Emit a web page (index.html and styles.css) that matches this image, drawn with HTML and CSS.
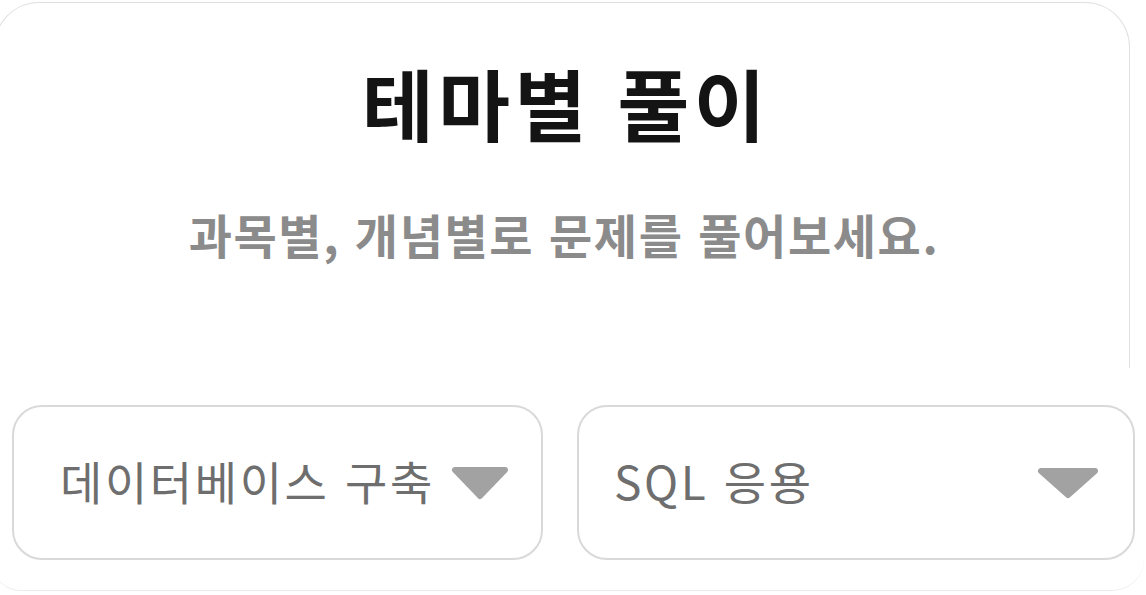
FILE: index.html
```html
<!DOCTYPE html>
<html lang="ko">
<head>
<meta charset="utf-8">
<title>테마별 풀이</title>
<link rel="stylesheet" href="styles.css">
</head>
<body>
<div class="sheet">
  <section class="top">
    <h1 class="title">테마별 풀이</h1>
    <p class="subtitle">과목별, 개념별로 문제를 풀어보세요.</p>
  </section>
  <div class="selects">
    <div class="select">
      <span class="select-label">데이터베이스 구축</span>
      <svg class="caret" width="60" height="36" viewBox="0 0 60 36"><polygon points="5,5 55,5 30,31" fill="#a2a2a2" stroke="#a2a2a2" stroke-width="6" stroke-linejoin="round"/></svg>
    </div>
    <div class="select">
      <span class="select-label">SQL 응용</span>
      <svg class="caret" width="64" height="34" viewBox="0 0 64 34"><polygon points="5,5 59,5 32,29" fill="#a2a2a2" stroke="#a2a2a2" stroke-width="6" stroke-linejoin="round"/></svg>
    </div>
  </div>
</div>
</body>
</html>
```

FILE: styles.css
```css
html, body {
  margin: 0;
  padding: 0;
  background: #ffffff;
  overflow: hidden;
}
body {
  width: 1146px;
  height: 595px;
  font-family: "Noto Sans CJK KR", "Noto Sans", sans-serif;
}
.sheet {
  margin-top: 2px;
  margin-left: -6px;
  width: 1150px;
  height: 589px;
  box-sizing: border-box;
  border-bottom: 1.5px solid #ececec;
  border-radius: 0 0 32px 26px;
}
.top {
  height: 366px;
  margin-right: 14px;
  box-sizing: border-box;
  border: 1.5px solid #e0e0e0;
  border-bottom: none;
  border-radius: 45px 45px 0 0;
  text-align: center;
  padding-top: 44px;
}
.title {
  margin: 0;
  padding-left: 8px;
  font-size: 78px;
  letter-spacing: 4.6px;
  line-height: 110px;
  font-weight: 700;
  color: #141414;
}
.subtitle {
  margin: 47px 0 0;
  padding-left: 4px;
  font-size: 47px;
  letter-spacing: 1.6px;
  line-height: 60px;
  font-weight: 700;
  color: #8b8b8b;
}
.selects {
  display: grid;
  grid-template-columns: 531px 558px;
  column-gap: 34px;
  padding-left: 18px;
  margin-top: 37px;
}
.select {
  height: 155px;
  box-sizing: border-box;
  border: 2px solid #d9d9d9;
  border-radius: 30px;
  display: flex;
  align-items: center;
  justify-content: space-between;
  padding: 0 31px 0 46px;
}
.select + .select {
  padding-left: 35px;
  padding-right: 33px;
}
.select-label {
  font-size: 46px;
  letter-spacing: 2.6px;
  font-weight: 400;
  color: #6e6e6e;
  line-height: 60px;
  margin-top: -6px;
}
.caret {
  display: block;
  flex: none;
}
```
